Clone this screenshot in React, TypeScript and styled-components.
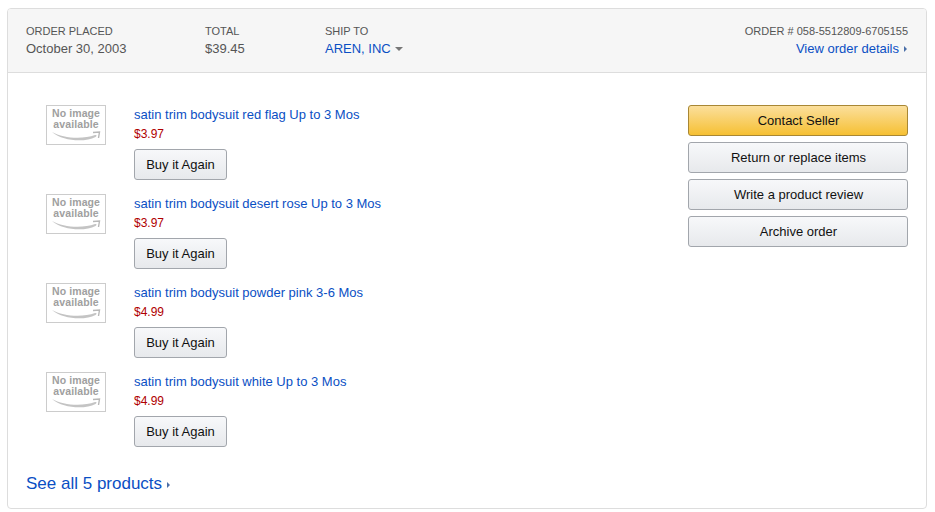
import React from "react";
import styled, { createGlobalStyle } from "styled-components";

const GlobalStyle = createGlobalStyle`
  html, body {
    margin: 0;
    background: #fff;
    font-family: "Liberation Sans", Arial, sans-serif;
  }
  body {
    padding: 8px 8px 0 7px;
  }
`;

const Card = styled.div`
  width: 920px;
  height: 501px;
  box-sizing: border-box;
  border: 1px solid #ddd;
  border-radius: 4px;
  display: flex;
  flex-direction: column;
  overflow: hidden;
`;

const Header = styled.div`
  height: 64px;
  box-sizing: border-box;
  background: #f6f6f6;
  border-bottom: 1px solid #ddd;
  padding: 15px 18px 0;
  display: flex;
`;

const HeaderCol = styled.div<{ $width: number }>`
  width: ${(p) => p.$width}px;
`;

const HeaderRight = styled.div`
  margin-left: auto;
  text-align: right;
`;

const Label = styled.div`
  font-size: 11px;
  line-height: 14px;
  color: #555;
  text-transform: uppercase;
`;

const Value = styled.div`
  font-size: 13px;
  line-height: 20px;
  margin-top: 1px;
  color: #555;
`;

const Link = styled.a`
  color: #0a4fc4;
  text-decoration: none;
`;

const Caret = styled.span`
  display: inline-block;
  margin-left: 4px;
  vertical-align: 2px;
  border-top: 4px solid #777;
  border-left: 4px solid transparent;
  border-right: 4px solid transparent;
`;

const Arrow = styled.span`
  display: inline-block;
  margin-left: 5px;
  margin-right: 1px;
  vertical-align: 1px;
  border-left: 3px solid #4a6fa8;
  border-top: 3px solid transparent;
  border-bottom: 3px solid transparent;
`;

const Body = styled.div`
  flex: 1;
  display: flex;
  justify-content: space-between;
  padding: 32px 18px 0 38px;
`;

const Products = styled.div`
  display: flex;
  flex-direction: column;
  gap: 14px;
`;

const Product = styled.div`
  display: flex;
  gap: 28px;
  height: 75px;
`;

const Thumb = styled.div`
  width: 60px;
  height: 40px;
  box-sizing: border-box;
  border: 1px solid #ccc;
  display: flex;
  flex-direction: column;
  align-items: center;
  padding-top: 2px;
  color: #a0a0a0;
  font-size: 10.5px;
  font-weight: bold;
  line-height: 11px;
  letter-spacing: 0.1px;
  text-align: center;
`;

const Smile = styled.svg`
  display: block;
  width: 50px;
  height: 11px;
  margin-top: 1px;
`;

const ProductInfo = styled.div`
  display: flex;
  flex-direction: column;
  align-items: flex-start;
`;

const ProductTitle = styled(Link)`
  font-size: 13px;
  line-height: 18px;
  margin-top: 1px;
`;

const Price = styled.div`
  font-size: 12px;
  line-height: 18px;
  margin-top: 1px;
  color: #b00000;
`;

const Button = styled.button`
  height: 31px;
  box-sizing: border-box;
  border: 1px solid #a2a6ac;
  border-radius: 3px;
  background: linear-gradient(#f7f8fa, #e7e9ec);
  color: #111;
  font-family: inherit;
  font-size: 13px;
  padding: 0 0 0 1px;
`;

const BuyButton = styled(Button)`
  width: 93px;
  margin-top: 6px;
  padding: 0;
`;

const Actions = styled.div`
  width: 220px;
  display: flex;
  flex-direction: column;
  gap: 6px;
`;

const PrimaryButton = styled(Button)`
  border-color: #a88734;
  background: linear-gradient(#fbdf9c, #f6c033);
`;

const SeeAll = styled(Link)`
  display: block;
  font-size: 17px;
  line-height: 20px;
  padding: 0 18px;
  margin-bottom: 14px;
`;

const products = [
  { title: "satin trim bodysuit red flag Up to 3 Mos", price: "$3.97" },
  { title: "satin trim bodysuit desert rose Up to 3 Mos", price: "$3.97" },
  { title: "satin trim bodysuit powder pink 3-6 Mos", price: "$4.99" },
  { title: "satin trim bodysuit white Up to 3 Mos", price: "$4.99" },
];

const App = () => {
  return (
    <>
      <GlobalStyle />
      <Card>
        <Header>
          <HeaderCol $width={179}>
            <Label>Order placed</Label>
            <Value>October 30, 2003</Value>
          </HeaderCol>
          <HeaderCol $width={120}>
            <Label>Total</Label>
            <Value>$39.45</Value>
          </HeaderCol>
          <HeaderCol $width={150}>
            <Label>Ship to</Label>
            <Value>
              <Link href="#">AREN, INC</Link>
              <Caret />
            </Value>
          </HeaderCol>
          <HeaderRight>
            <Label>Order # 058-5512809-6705155</Label>
            <Value>
              <Link href="#">View order details</Link>
              <Arrow />
            </Value>
          </HeaderRight>
        </Header>
        <Body>
          <Products>
            {products.map((product) => (
              <Product key={product.title}>
                <Thumb>
                  No image
                  <br />
                  available
                  <Smile viewBox="0 0 50 11">
                    <path d="M1 1C12 7.5 32 8.5 44 4C46 3.5 46 5 44.5 6C34 11.5 12 10.5 1 1Z" fill="#c4c4c4" />
                    <path d="M42 1.5L48.5 1L47.5 7" fill="none" stroke="#b8b8b8" strokeWidth="1.4" />
                  </Smile>
                </Thumb>
                <ProductInfo>
                  <ProductTitle href="#">{product.title}</ProductTitle>
                  <Price>{product.price}</Price>
                  <BuyButton>Buy it Again</BuyButton>
                </ProductInfo>
              </Product>
            ))}
          </Products>
          <Actions>
            <PrimaryButton>Contact Seller</PrimaryButton>
            <Button>Return or replace items</Button>
            <Button>Write a product review</Button>
            <Button>Archive order</Button>
          </Actions>
        </Body>
        <SeeAll href="#">
          See all 5 products
          <Arrow />
        </SeeAll>
      </Card>
    </>
  );
};

export default App;
